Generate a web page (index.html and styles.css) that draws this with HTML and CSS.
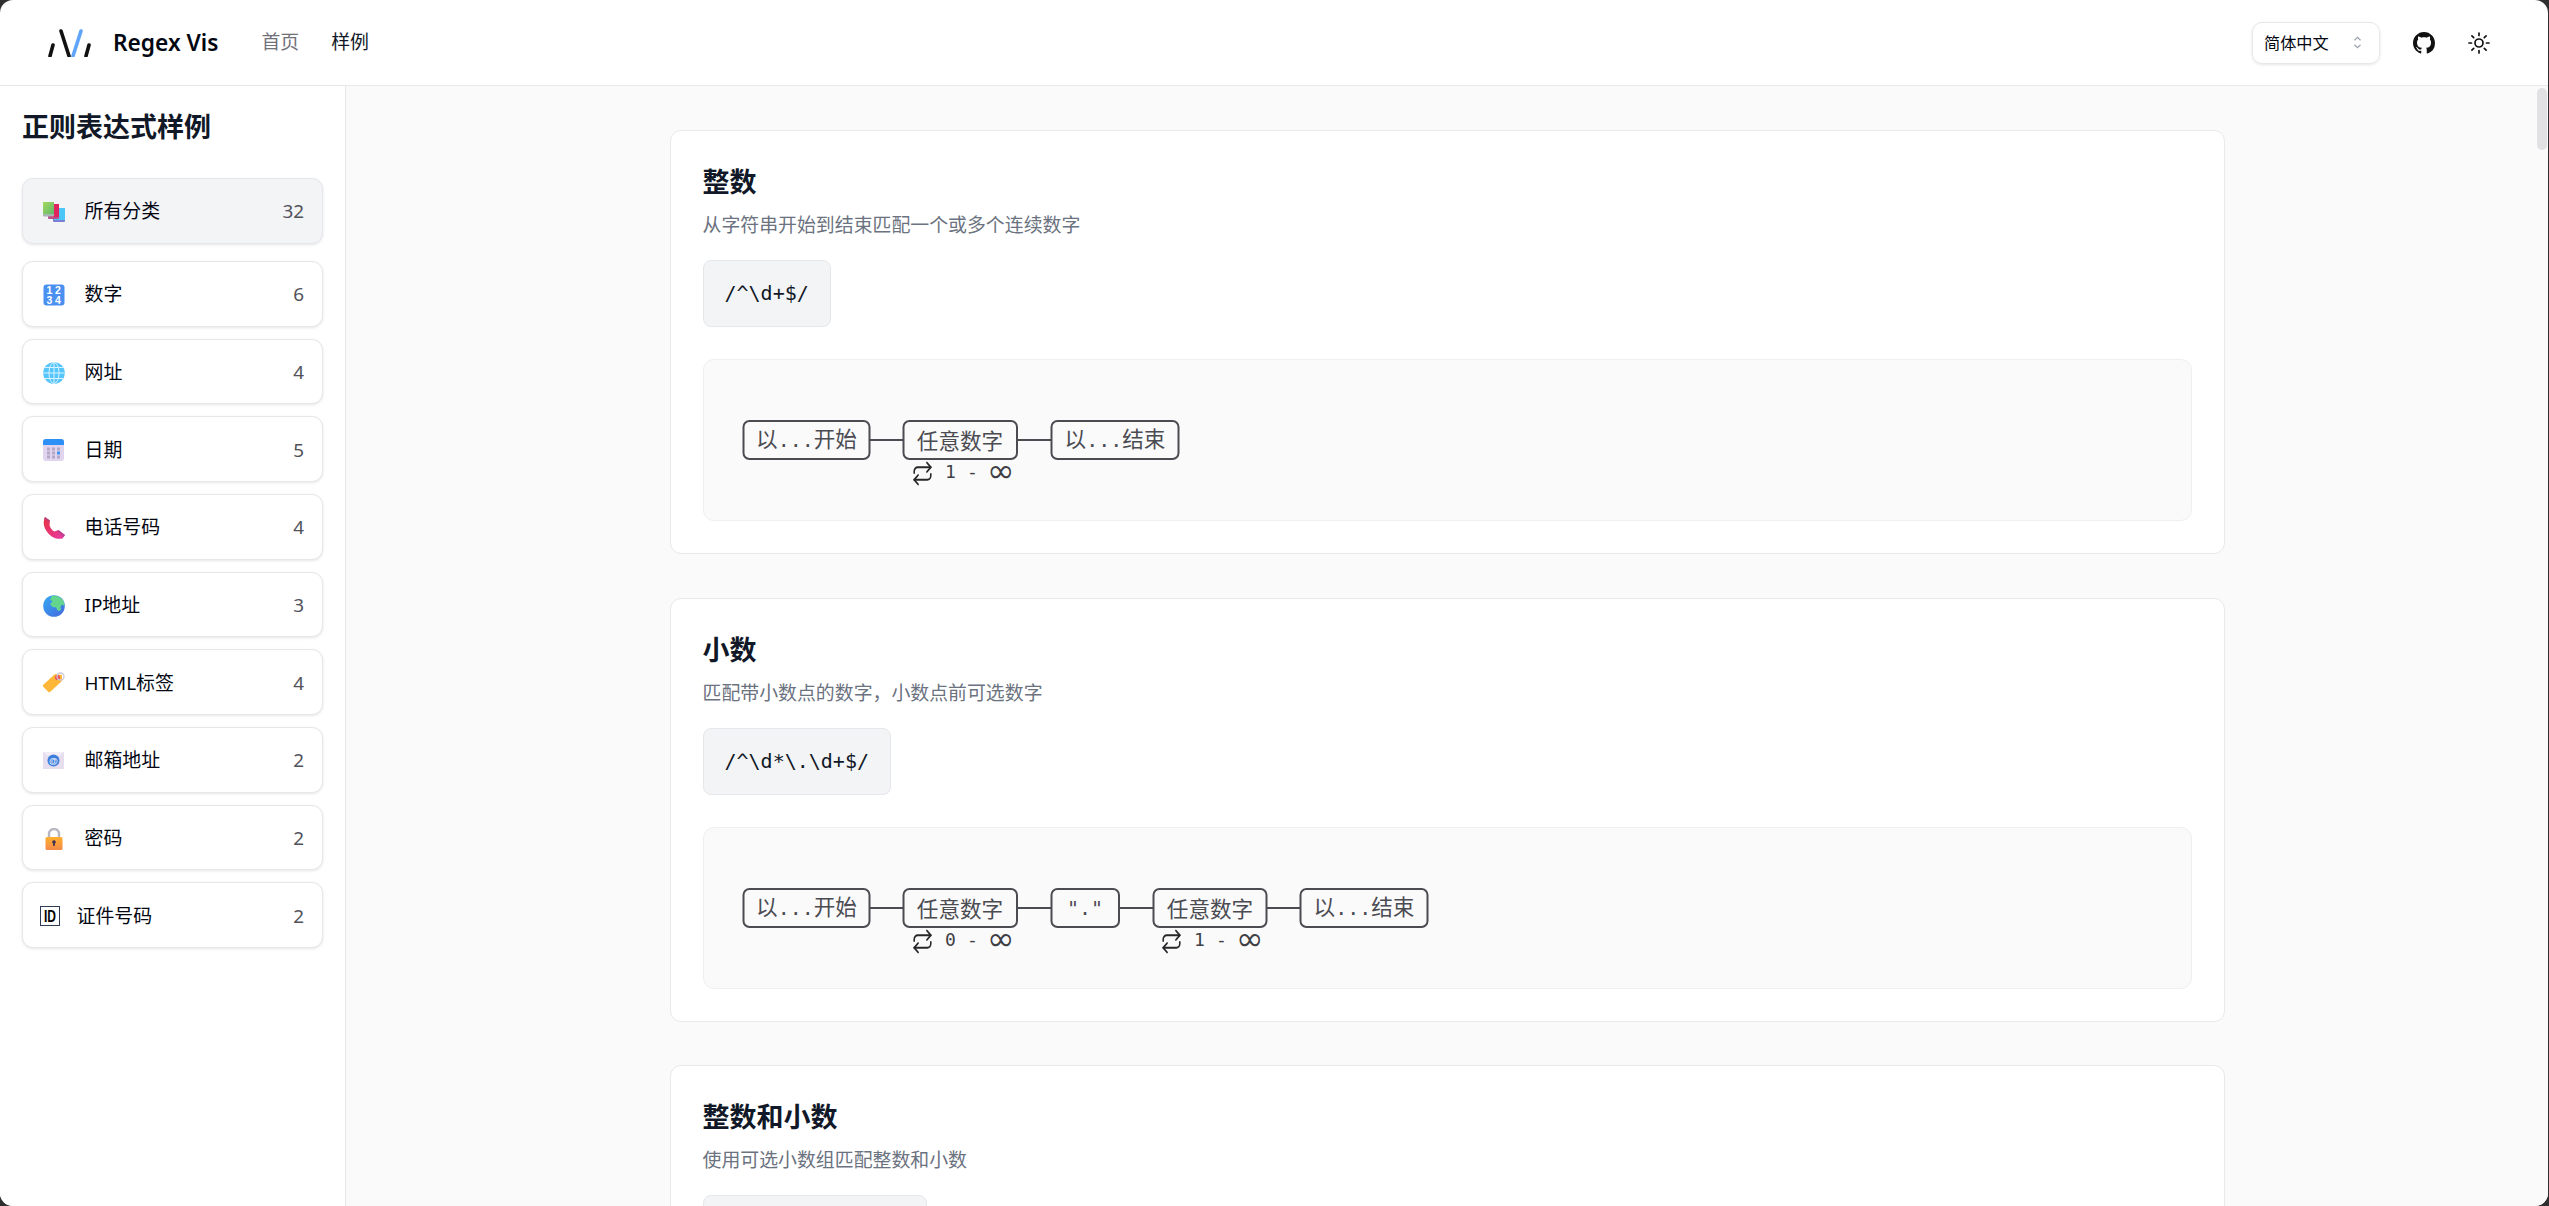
FILE: index.html
```html
<!DOCTYPE html>
<html lang="zh-CN">

<head>
    <meta charset="UTF-8">
    <meta name="viewport" content="width=device-width, initial-scale=1.0">
    <title>Regex Vis</title>
    <link rel="stylesheet" href="styles.css">
</head>

<body>
    <svg class="defs" width="0" height="0">
        <defs>
            <symbol id="repeat" viewBox="0 0 24 24" preserveAspectRatio="none">
                <path d="m17 1.5 4.5 4.5-4.5 4.5" />
                <path d="M2.5 11.5v-1.500a4 4 0 0 1 4-4h15" />
                <path d="m7 22.500-4.500-4.500 4.500-4.500" />
                <path d="M21.500 12.500v1.500a4 4 0 0 1-4 4h-15" />
            </symbol>
            <linearGradient id="greenBook" x1="0" y1="0" x2="1" y2="1">
                <stop offset="0" stop-color="#a5d95f" />
                <stop offset="1" stop-color="#62b86a" />
            </linearGradient>
            <linearGradient id="orange" x1="0" y1="0" x2="0" y2="1">
                <stop offset="0" stop-color="#ffb02e" />
                <stop offset="1" stop-color="#f2894a" />
            </linearGradient>
            <linearGradient id="phone" x1="0" y1="0" x2="1" y2="1">
                <stop offset="0" stop-color="#e8323f" />
                <stop offset="1" stop-color="#e83aa8" />
            </linearGradient>
            <linearGradient id="earth" x1="0" y1="0" x2="1" y2="1">
                <stop offset="0" stop-color="#36a9f0" />
                <stop offset="1" stop-color="#4468e0" />
            </linearGradient>
        </defs>
    </svg>

    <div class="app">
        <header class="topbar">
            <div class="brand">
                <svg class="logo" viewBox="0 0 44 28" width="44" height="28">
                    <path d="M2 27 5 16M13 2l8 25" stroke="#111" />
                    <path d="M25 27 33 2" stroke="#60a5fa" />
                    <path d="M38 27l3-11" stroke="#111" />
                </svg>
                <span class="brand-name">Regex Vis</span>
            </div>
            <nav class="nav">
                <a class="nav-link">首页</a>
                <a class="nav-link active">样例</a>
            </nav>
            <div class="topbar-right">
                <div class="lang-select">
                    <span>简体中文</span>
                    <svg viewBox="0 0 12 20" width="9" height="15">
                        <path d="M2 7l4-4 4 4M2 13l4 4 4-4" />
                    </svg>
                </div>
                <svg class="github" viewBox="0 0 16 16" width="22" height="22">
                    <path d="M8 0C3.580 0 0 3.580 0 8c0 3.540 2.290 6.530 5.470 7.590.4.070.55-.17.55-.38 0-.19-.01-.82-.01-1.490-2.010.37-2.530-.49-2.690-.94-.09-.23-.48-.94-.82-1.130-.28-.15-.68-.52-.01-.53.63-.01 1.080.58 1.230.82.72 1.210 1.870.87 2.330.66.070-.52.280-.87.510-1.070-1.780-.2-3.640-.89-3.640-3.950 0-.87.310-1.590.820-2.150-.080-.2-.360-1.020.080-2.120 0 0 .670-.21 2.200.82.640-.18 1.320-.27 2-.27s1.360.09 2 .27c1.530-1.040 2.200-.82 2.200-.82.440 1.100.160 1.920.080 2.120.510.560.820 1.270.820 2.150 0 3.070-1.870 3.750-3.650 3.950.290.250.540.730.540 1.480 0 1.070-.010 1.930-.010 2.200 0 .210.150.460.550.380A8.010 8.010 0 0 0 16 8c0-4.420-3.580-8-8-8z" />
                </svg>
                <svg class="sun" viewBox="0 0 24 24" width="24" height="24">
                    <circle cx="12" cy="12" r="4" />
                    <path d="M12 2v2.500M12 19.500V22M2 12h2.500M19.500 12H22M4.900 4.900l1.800 1.800M17.300 17.300l1.800 1.800M4.900 19.100l1.800-1.800M17.300 6.700l1.800-1.800" />
                </svg>
            </div>
        </header>

        <div class="body-row">
            <aside class="sidebar">
                <h1 class="sidebar-title">正则表达式样例</h1>
                <a class="category active">
                    <svg class="icon" viewBox="0 0 22 22">
                        <rect x="10" y="7" width="12" height="14" rx="1" fill="#7a7fd6" />
                        <rect x="11" y="7" width="11" height="12" fill="#4cc6f7" />
                        <rect x="5" y="3" width="11" height="15" rx="1" fill="#b7508f" />
                        <rect x="7" y="3" width="9" height="13" fill="#e0245e" />
                        <rect x="0" y="1" width="11" height="14.500" rx="1" fill="#a9b4b4" />
                        <rect x="0" y="1" width="11" height="12" fill="url(#greenBook)" />
                    </svg>
                    <span class="category-name">所有分类</span>
                    <span class="count">32</span>
                </a>
                <div class="category-list">
                    <a class="category">
                        <svg class="icon" viewBox="0 0 22 22">
                            <rect x="0.500" y="0.500" width="21" height="21" rx="3" fill="#4a90f0" />
                            <text class="keycap" x="6.500" y="10">1</text>
                            <text class="keycap" x="15" y="10">2</text>
                            <text class="keycap" x="6.500" y="20">3</text>
                            <text class="keycap" x="15" y="20">4</text>
                        </svg>
                        <span class="category-name">数字</span>
                        <span class="count">6</span>
                    </a>
                    <a class="category">
                        <svg class="icon" viewBox="0 0 22 22">
                            <circle cx="11" cy="11" r="10.800" fill="#55c5fb" />
                            <g class="globe-lines">
                                <ellipse cx="11" cy="11" rx="5" ry="10.500" />
                                <path d="M11 .5v21M.5 11h21M2 5.500h18M2 16.500h18" />
                            </g>
                        </svg>
                        <span class="category-name">网址</span>
                        <span class="count">4</span>
                    </a>
                    <a class="category">
                        <svg class="icon" viewBox="0 0 22 22">
                            <rect x="0" y="0" width="21" height="22" rx="3" fill="#e0d4ee" />
                            <path d="M0 6V3a3 3 0 0 1 3-3h15a3 3 0 0 1 3 3v3z" fill="#2c90f6" />
                            <g fill="#b5a8c8">
                                <rect x="4" y="8.500" width="3" height="3" />
                                <rect x="9" y="8.500" width="3" height="3" />
                                <rect x="14" y="8.500" width="3" height="3" />
                                <rect x="4" y="12.500" width="3" height="3" />
                                <rect x="9" y="12.500" width="3" height="3" />
                                <rect x="14" y="12.500" width="3" height="3" fill="#3f94f0" />
                                <rect x="4" y="16.500" width="3" height="3" />
                                <rect x="9" y="16.500" width="3" height="3" />
                                <rect x="14" y="16.500" width="3" height="3" />
                            </g>
                        </svg>
                        <span class="category-name">日期</span>
                        <span class="count">5</span>
                    </a>
                    <a class="category">
                        <svg class="icon" viewBox="0 0 22 22">
                            <path d="M2 0 7 3.500 6.500 8C7 10.500 9 13.500 11.500 14.500L15.500 13 22 18 19.500 21.500C13 23 6.500 19.500 2.500 12.500 .5 8.500 0 4 2 0z" fill="url(#phone)" />
                            <path d="M2 0 7 3.500 6 5 1 1.500zM15.500 13 22 18 20.500 20 14.500 14.500z" fill="#a8468f" opacity=".7" />
                        </svg>
                        <span class="category-name">电话号码</span>
                        <span class="count">4</span>
                    </a>
                    <a class="category">
                        <svg class="icon" viewBox="0 0 22 22">
                            <circle cx="11" cy="11" r="10.800" fill="url(#earth)" />
                            <path d="M9 1C12 0 17 1 20 5 21 7 21.500 9 21.500 11L19 9.500 17.500 12 18 15 15 16 13 12.500 9.500 12 7 9 9.500 6.500 7 4z" fill="#64d58e" />
                        </svg>
                        <span class="category-name">IP地址</span>
                        <span class="count">3</span>
                    </a>
                    <a class="category">
                        <svg class="icon" viewBox="0 0 22 22">
                            <path d="M0 13 12 2 19 3 19 9 7 20a1 1 0 0 1-1.500 0L0 14.500z" fill="#ffb73a" />
                            <circle cx="14.500" cy="5.500" r="2.500" fill="#e8505b" />
                            <circle cx="17.500" cy="4.500" r="3.500" fill="none" stroke="#cfc8d8" stroke-width="1.300" />
                        </svg>
                        <span class="category-name">HTML标签</span>
                        <span class="count">4</span>
                    </a>
                    <a class="category">
                        <svg class="icon" viewBox="0 0 22 22">
                            <rect x="0" y="2" width="21" height="17" fill="#e6deef" />
                            <path d="M0 2l10.500 9L21 2" fill="#f1ecf6" />
                            <circle cx="10.500" cy="10.500" r="6" fill="#3f7fdc" />
                            <text class="at-sign" x="10.500" y="13.500">@</text>
                        </svg>
                        <span class="category-name">邮箱地址</span>
                        <span class="count">2</span>
                    </a>
                    <a class="category">
                        <svg class="icon" viewBox="0 0 22 22">
                            <path d="M6 10V6a5 5 0 0 1 10 0v4" fill="none" stroke="#b8b8c4" stroke-width="2.400" />
                            <rect x="2.500" y="9" width="17" height="13" rx="1.500" fill="url(#orange)" />
                            <circle cx="11" cy="14" r="1.800" fill="#3b2f55" />
                            <rect x="10.200" y="14" width="1.600" height="4" fill="#3b2f55" />
                        </svg>
                        <span class="category-name">密码</span>
                        <span class="count">2</span>
                    </a>
                    <a class="category">
                        <svg class="icon icon-id" viewBox="0 0 20 20">
                            <rect x="0.500" y="0.500" width="19" height="19" fill="#fff" stroke="#2f3a55" />
                            <text class="id-text" x="10" y="15.500" textLength="12" lengthAdjust="spacingAndGlyphs">ID</text>
                        </svg>
                        <span class="category-name">证件号码</span>
                        <span class="count">2</span>
                    </a>
                </div>
            </aside>

            <main class="content">
                <section class="card">
                    <h2 class="card-title">整数</h2>
                    <p class="card-desc">从字符串开始到结束匹配一个或多个连续数字</p>
                    <code class="regex">/^\d+$/</code>
                    <div class="graph">
                        <svg class="diagram" viewBox="0 0 1487 160" width="1487" height="160">
                            <path class="edge" d="M165 80h34M313 80h34" />
                            <rect class="node" x="39.500" y="61" width="126" height="38" rx="6" />
                            <rect class="node" x="199.500" y="61" width="113.500" height="38" rx="6" />
                            <rect class="node" x="347.500" y="61" width="127" height="38" rx="6" />
                            <text class="node-text" x="102.500" y="87">以<tspan class="dots">...</tspan>开始</text>
                            <text class="node-text" x="256" y="89">任意数字</text>
                            <text class="node-text" x="411" y="87">以<tspan class="dots">...</tspan>结束</text>
                            <use href="#repeat" class="repeat" x="208" y="101" width="21" height="25" />
                            <text class="repeat-text" x="241" y="118">1</text>
                            <text class="repeat-text" x="263" y="118">-</text>
                            <text class="infinity" x="283" y="122">∞</text>
                        </svg>
                    </div>
                </section>

                <section class="card">
                    <h2 class="card-title">小数</h2>
                    <p class="card-desc">匹配带小数点的数字，小数点前可选数字</p>
                    <code class="regex">/^\d*\.\d+$/</code>
                    <div class="graph">
                        <svg class="diagram" viewBox="0 0 1487 160" width="1487" height="160">
                            <path class="edge" d="M165 80h34M313 80h34M415 80h34M562 80h34" />
                            <rect class="node" x="39.500" y="61" width="126" height="38" rx="6" />
                            <rect class="node" x="199.500" y="61" width="113.500" height="38" rx="6" />
                            <rect class="node" x="347.500" y="61" width="67.500" height="38" rx="6" />
                            <rect class="node" x="449.500" y="61" width="113" height="38" rx="6" />
                            <rect class="node" x="596.500" y="61" width="127" height="38" rx="6" />
                            <text class="node-text" x="102.500" y="87">以<tspan class="dots">...</tspan>开始</text>
                            <text class="node-text" x="256" y="89">任意数字</text>
                            <text class="node-text quote" x="381" y="87">"."</text>
                            <text class="node-text" x="506" y="89">任意数字</text>
                            <text class="node-text" x="660" y="87">以<tspan class="dots">...</tspan>结束</text>
                            <use href="#repeat" class="repeat" x="208" y="101" width="21" height="25" />
                            <text class="repeat-text" x="241" y="118">0</text>
                            <text class="repeat-text" x="263" y="118">-</text>
                            <text class="infinity" x="283" y="122">∞</text>
                            <use href="#repeat" class="repeat" x="457" y="101" width="21" height="25" />
                            <text class="repeat-text" x="490" y="118">1</text>
                            <text class="repeat-text" x="512" y="118">-</text>
                            <text class="infinity" x="532" y="122">∞</text>
                        </svg>
                    </div>
                </section>

                <section class="card">
                    <h2 class="card-title">整数和小数</h2>
                    <p class="card-desc">使用可选小数组匹配整数和小数</p>
                    <code class="regex">/^\d+(\.\d+)?$/</code>
                </section>

                <div class="scroll-thumb"></div>
            </main>
        </div>
    </div>
</body>

</html>
```

FILE: styles.css
```css
* {
    box-sizing: border-box;
}

html,
body {
    height: 100%;
    margin: 0;
    overflow: hidden;
    background-color: #2f2f2f;
}

body {
    font-family: "Noto Sans", "Noto Sans CJK SC", sans-serif;
    color: #030712;
}

.defs {
    position: absolute;
}

.app {
    display: flex;
    flex-direction: column;
    height: 100%;
    margin-right: 1px;
    border-radius: 13px;
    overflow: hidden;
    background-color: #fff;
}

/* header */
.topbar {
    display: flex;
    align-items: center;
    flex: none;
    height: 86px;
    padding: 0 57px 0 48px;
    border-bottom: 1px solid #e5e7eb;
}

.brand {
    display: flex;
    align-items: center;
    gap: 21px;
}

.logo {
    display: block;
    fill: none;
    stroke-width: 3.6;
    stroke-linecap: round;
}

.brand-name {
    font-size: 22.7px;
    font-weight: 600;
    line-height: 30px;
}

.nav {
    display: flex;
    gap: 32px;
    margin-left: 43px;
    font-size: 18.9px;
    line-height: 27px;
}

.nav-link {
    color: #71717a;
}

.nav-link.active {
    color: #111827;
}

.topbar-right {
    display: flex;
    align-items: center;
    margin-left: auto;
}

.lang-select {
    display: flex;
    align-items: center;
    justify-content: space-between;
    width: 128px;
    height: 42px;
    padding: 0 17px 0 11px;
    border: 1px solid #e5e7eb;
    border-radius: 10px;
    box-shadow: 0 1px 3px rgba(0, 0, 0, 0.1);
    font-size: 16.2px;
    line-height: 24px;
}

.lang-select svg {
    fill: none;
    stroke: #9ca3af;
    stroke-width: 1.6;
}

.github {
    margin-left: 33px;
    fill: #111;
}

.sun {
    margin-left: 32px;
    fill: none;
    stroke: #111;
    stroke-width: 1.7;
    stroke-linecap: round;
}

/* page body */
.body-row {
    display: flex;
    flex: 1;
    min-height: 0;
}

.sidebar {
    flex: none;
    width: 346px;
    padding: 22px 22px 0;
    border-right: 1px solid #e5e7eb;
    background-color: #fff;
}

.sidebar-title {
    margin: 0 0 32px;
    color: #111827;
    font-size: 27px;
    font-weight: 700;
    line-height: 38px;
}

.category-list {
    display: flex;
    flex-direction: column;
    gap: 12px;
    margin-top: 17.5px;
}

.category {
    display: flex;
    align-items: center;
    width: 301px;
    height: 65.67px;
    padding: 2px 18px 0 19.5px;
    border: 1px solid #e5e7eb;
    border-radius: 11px;
    background-color: #fff;
    box-shadow: 0 1px 3px rgba(0, 0, 0, 0.1);
    font-size: 18.9px;
    line-height: 27px;
}

.category.active {
    background-color: #f3f4f6;
}

.icon {
    flex: none;
    width: 22px;
    height: 22px;
    margin-right: 20px;
}

.icon-id {
    width: 20px;
    height: 20px;
    margin-left: -3px;
    margin-right: 17px;
}

.category-name {
    flex: 1;
}

.count {
    color: #52525b;
}

.keycap {
    fill: #fff;
    font-family: "Liberation Sans", sans-serif;
    font-size: 10.5px;
    font-weight: 700;
    text-anchor: middle;
}

.globe-lines {
    fill: none;
    stroke: #d8f3ff;
    stroke-width: 1;
}

.at-sign {
    fill: #e8f0ff;
    font-family: "Liberation Sans", sans-serif;
    font-size: 9px;
    font-weight: 700;
    text-anchor: middle;
}

.id-text {
    fill: #000;
    font-family: "Liberation Sans", sans-serif;
    font-size: 16px;
    font-weight: 700;
    text-anchor: middle;
}

/* main column */
.content {
    position: relative;
    flex: 1;
    min-width: 0;
    padding-top: 44px;
    overflow: hidden;
    background-color: #fafafa;
}

.card {
    width: 1555px;
    height: 424px;
    margin: 0 auto 43.5px;
    padding: 32px;
    border: 1px solid #e8e9ec;
    border-radius: 11px;
    background-color: #fff;
}

.card-title {
    margin: 0 0 11px;
    color: #111827;
    font-size: 27px;
    font-weight: 700;
    line-height: 38px;
}

.card-desc {
    margin: 0 0 21px;
    color: #6b7280;
    font-size: 18.9px;
    line-height: 27px;
}

.regex {
    display: table;
    height: 67px;
    padding: 0 21px;
    border: 1px solid #e5e7eb;
    border-radius: 8px;
    background-color: #f3f4f6;
    color: #111827;
    font-family: "DejaVu Sans Mono", monospace;
    font-size: 20px;
    line-height: 65px;
}

.graph {
    height: 162px;
    margin-top: 32px;
    border: 1px solid #eeeff1;
    border-radius: 11px;
    background-color: #fafafa;
}

.diagram {
    display: block;
}

.edge {
    fill: none;
    stroke: #4b4b52;
    stroke-width: 2;
}

.node {
    fill: #fafafa;
    stroke: #4b4b52;
    stroke-width: 2;
}

.node-text {
    fill: #4b4b52;
    font-family: "Noto Sans CJK SC", sans-serif;
    font-size: 21.6px;
    text-anchor: middle;
}

.dots,
.quote {
    font-family: "DejaVu Sans Mono", monospace;
    font-size: 20px;
}

.repeat {
    fill: none;
    stroke: #27272a;
    stroke-width: 1.8;
    stroke-linecap: round;
    stroke-linejoin: round;
}

.repeat-text {
    fill: #3f3f46;
    font-family: "DejaVu Sans Mono", monospace;
    font-size: 18px;
}

.infinity {
    fill: #3f3f46;
    font-family: "DejaVu Sans", sans-serif;
    font-size: 33px;
}

.scroll-thumb {
    position: absolute;
    top: 2px;
    right: 1px;
    width: 10px;
    height: 62px;
    border-radius: 5px;
    background-color: #e1e1e4;
}
```
